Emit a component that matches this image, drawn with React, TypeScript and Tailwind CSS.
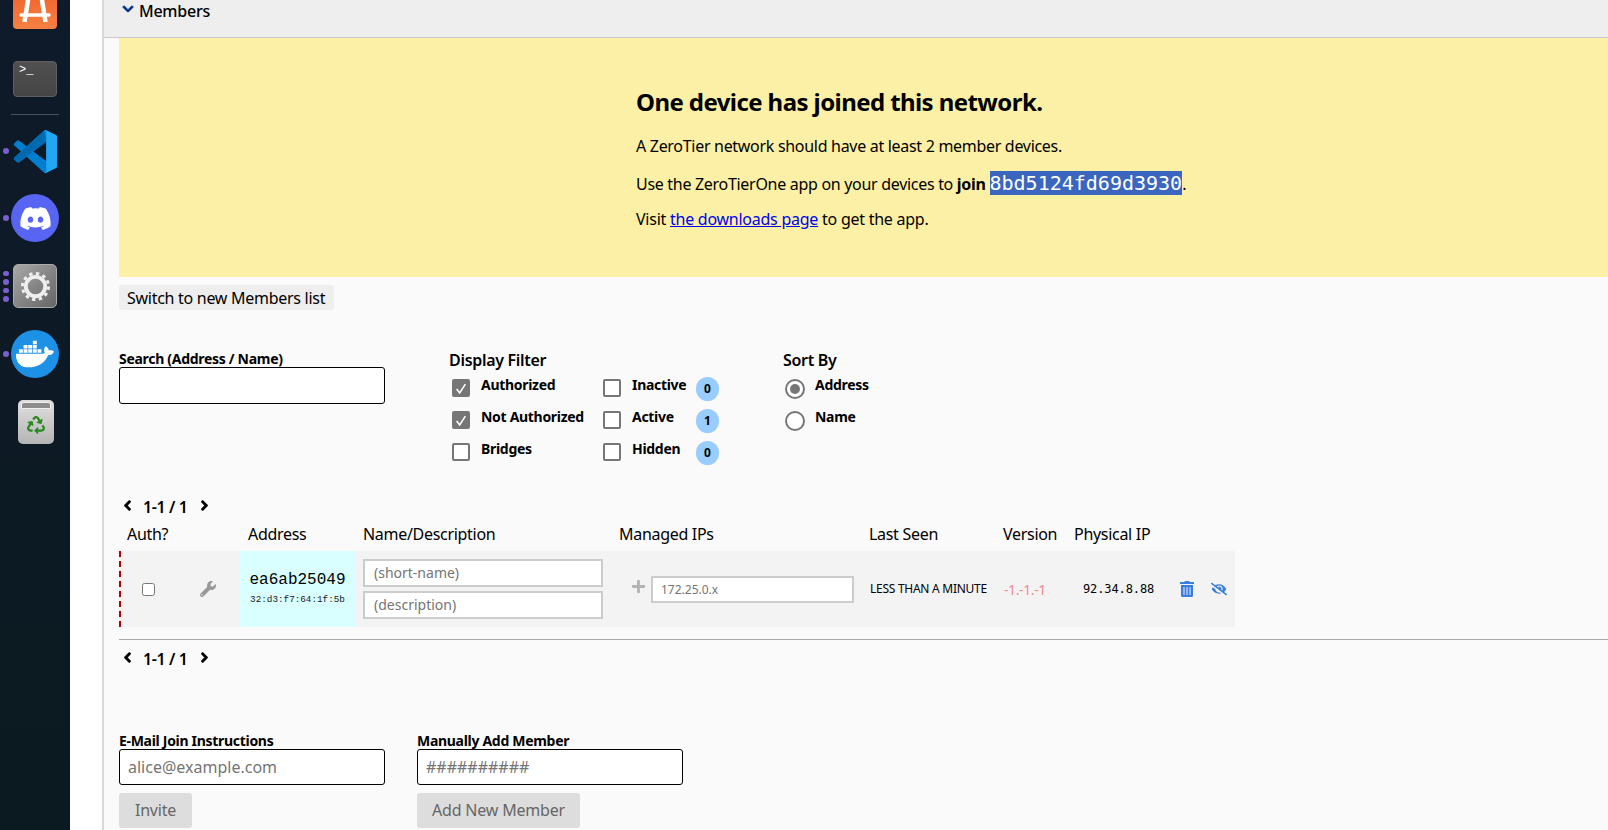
import React from "react";
import { FaChevronDown, FaChevronLeft, FaChevronRight, FaWrench, FaPlus, FaTrashAlt, FaEyeSlash, FaDiscord, FaDocker, FaRecycle } from "react-icons/fa";

const ff = "[font-family:'Noto_Sans','Open_Sans',sans-serif]";

function Dot({ n = 1 }: { n?: number }) {
  return (
    <div className="flex w-[11px] shrink-0 flex-col items-center justify-center gap-[3px] pl-[1px]">
      {Array.from({ length: n }).map((_, i) => (
        <span key={i} className="h-[5.5px] w-[5.5px] rounded-full bg-[#7a5fd0]" />
      ))}
    </div>
  );
}

function VsCodeLogo() {
  return (
    <svg viewBox="0 0 100 100" className="h-[43px] w-[43px]">
      <path d="M70.9 99.3a6.2 6.2 0 0 0 5-.2l20.6-9.9a6.2 6.2 0 0 0 3.5-5.6V16.4a6.2 6.2 0 0 0-3.5-5.6L75.9.9a6.2 6.2 0 0 0-7.1 1.2L29.4 38 12.2 25a4.2 4.2 0 0 0-5.3.2L1.4 30.3a4.2 4.2 0 0 0 0 6.2L16.3 50 1.4 63.5a4.2 4.2 0 0 0 0 6.2l5.5 5a4.2 4.2 0 0 0 5.3.3l17.2-13 39.4 36a6.2 6.2 0 0 0 2.1 1.3zM75 27.3 45.1 50 75 72.7V27.3z" fill="#007fd0" fillRule="evenodd" />
      <path d="M12.2 75 6.9 74.7 1.4 69.7a4.2 4.2 0 0 1 0-6.2L68.8 2.1 75 27.3 12.2 75z" fill="#0069b0" />
      <path d="M70.9 99.3a6.2 6.2 0 0 0 5-.2l20.6-9.9a6.2 6.2 0 0 0 3.5-5.6V16.4a6.2 6.2 0 0 0-3.5-5.6L75.9.9a6.2 6.2 0 0 0-5-.2c1.9.8 4.1 2.4 4.1 5.3v88c0 2.9-2.2 4.5-4.1 5.3z" fill="#22a7f2" />
    </svg>
  );
}

function Dock() {
  return (
    <aside className="flex h-full w-[70px] shrink-0 flex-col overflow-hidden bg-gradient-to-b from-[#0f1a2a] to-[#0b1a20]">
      <div className="-mt-[8px] flex h-[37px] pl-[13px]">
        <div className="flex h-[37px] w-[44px] items-center justify-center rounded-[4px] bg-gradient-to-b from-[#f0622a] to-[#f68144]">
          <svg viewBox="0 0 44 37" className="h-[37px] w-[44px]">
            <path d="M16 2 L11.500 30 M28 2 L32.500 30 M16 2 H28" stroke="#fff" strokeWidth="4.500" fill="none" />
            <path d="M8 23 H36" stroke="#fff" strokeWidth="3.500" strokeLinecap="round" />
          </svg>
        </div>
      </div>
      <div className="mt-[32px] flex pl-[13px]">
        <div className="h-[36px] w-[44px] rounded-[4px] border border-[#5f5f5f] bg-gradient-to-b from-[#505050] to-[#454545] pl-[5px] font-['Liberation_Mono',monospace] text-[12px] leading-[17px] text-white">
          &gt;_
        </div>
      </div>
      <div className="mx-[11px] mt-[17px] h-px w-[48px] bg-[#4a5058]" />
      <div className="mt-[14px] flex h-[44px] items-center">
        <Dot />
        <span className="ml-[2px] flex h-[44px] w-[44px] items-center justify-center">
          <VsCodeLogo />
        </span>
      </div>
      <div className="mt-[21px] flex h-[48px] items-center">
        <Dot />
        <span className="flex h-[48px] w-[48px] items-center justify-center rounded-full bg-[#5865f2] text-white">
          <FaDiscord size={33} />
        </span>
      </div>
      <div className="mt-[22px] flex h-[44px] items-center">
        <Dot n={4} />
        <span className="ml-[2px] flex h-[44px] w-[44px] items-center justify-center rounded-[5px] border border-[#aaa] bg-gradient-to-br from-[#a8a8a8] to-[#666]">
          <svg viewBox="0 0 32 32" className="h-[31px] w-[31px]">
            <circle cx="16" cy="16" r="10" fill="none" stroke="#eee" strokeWidth="4" />
            <circle cx="16" cy="16" r="13.500" fill="none" stroke="#eee" strokeWidth="3" strokeDasharray="3.500 3.570" />
          </svg>
        </span>
      </div>
      <div className="mt-[22px] flex h-[48px] items-center">
        <Dot />
        <span className="flex h-[48px] w-[48px] items-center justify-center rounded-full bg-[#1d91e6] text-white">
          <FaDocker size={38} />
        </span>
      </div>
      <div className="mt-[22px] flex justify-center pl-[1px]">
        <div className="flex h-[44px] w-[36px] flex-col items-center rounded-[5px] bg-gradient-to-b from-[#e0e0e0] to-[#b5b5b5]">
          <div className="mt-[2px] h-[7px] w-[30px] rounded-t-[3px] border border-[#eee] bg-[#8e8e8e]" />
          <span className="mt-[7px] text-[#2a8a1d]"><FaRecycle size={18} /></span>
        </div>
      </div>
    </aside>
  );
}

function Check({ checked, label, badge }: { checked?: boolean; label: string; badge?: string }) {
  return (
    <div className="flex h-[32px] items-start">
      <span className={`mt-[4px] flex h-[18px] w-[18px] shrink-0 items-center justify-center rounded-[2px] border-2 border-[#767676] ${checked ? "bg-[#767676]" : "bg-white"}`}>
        {checked && (
          <svg viewBox="0 0 16 16" className="h-[15px] w-[15px]"><path d="M3 8.500 L6.500 13 L13 3" stroke="#fff" strokeWidth="1.800" fill="none" /></svg>
        )}
      </span>
      <span className="ml-[11px] text-[14px] leading-[20px] font-bold tracking-[-0.3px]">{label}</span>
      {badge && (
        <span className="ml-auto mt-[2px] flex h-[24px] w-[23px] items-center justify-center rounded-full bg-[#99ccff] text-[12px] font-bold">{badge}</span>
      )}
    </div>
  );
}

function Radio({ checked, label }: { checked?: boolean; label: string }) {
  return (
    <div className="flex h-[32px] items-start">
      <span className="mt-[4px] flex h-[20px] w-[20px] items-center justify-center rounded-full border-2 border-[#767676] bg-white">
        {checked && <span className="h-[10px] w-[10px] rounded-full bg-[#767676]" />}
      </span>
      <span className="ml-[10px] text-[14px] leading-[20px] font-bold tracking-[-0.3px]">{label}</span>
    </div>
  );
}

function Pager({ className }: { className: string }) {
  return (
    <div className={`flex h-[20px] items-center text-[#000] ${className}`}>
      <FaChevronLeft size={11} stroke="currentColor" strokeWidth={50} className="ml-[3px] mb-[4px]" />
      <span className="ml-[10px] w-[56px] text-[16px] font-semibold tracking-[-0.4px]">1-1 / 1</span>
      <FaChevronRight size={11} stroke="currentColor" strokeWidth={50} className="mb-[4px]" />
    </div>
  );
}

function Field({ label, placeholder, button, w }: { label: string; placeholder: string; button: string; w: string }) {
  return (
    <div className="w-[266px]">
      <div className="h-[17px] text-[14px] leading-[18px] font-bold tracking-[-0.3px]">{label}</div>
      <input readOnly placeholder={placeholder} className="block h-[36px] w-[266px] rounded-[3px] border border-black bg-white px-[8px] text-[16px] outline-none placeholder:text-[#757575]" />
      <button className={`mt-[8px] block h-[35px] rounded-[3px] bg-[#dddddd] pb-[1px] text-[16px] tracking-[-0.2px] text-[#666] ${w}`}>{button}</button>
    </div>
  );
}

export default function App() {
  return (
    <div className={`flex h-[830px] w-[1608px] overflow-hidden bg-white text-black ${ff}`}>
      <Dock />
      <div className="w-[32px] shrink-0 bg-white" />
      <main className="flex h-full min-w-0 flex-1 flex-col border-l-2 border-[#d8d8d8] bg-[#fafafa]">
        <header className="flex h-[38px] shrink-0 items-start border-b border-[#c8c8c8] bg-[#eeeeee]">
          <FaChevronDown size={12} stroke="currentColor" strokeWidth={40} className="ml-[18px] mt-[3px] text-[#00338a]" />
          <span className="ml-[5px] text-[16px] leading-[22px] font-medium tracking-[-0.25px]">Members</span>
        </header>
        <div className="ml-[15px] flex flex-col">
          <section className="h-[239px] bg-[#fbf0a5] pl-[517px] pt-[47px] text-[16px] tracking-[-0.3px]">
            <h2 className="h-[34px] text-[24px] leading-[34px] font-bold tracking-[-0.58px]">One device has joined this network.</h2>
            <p className="mt-[14px] h-[26px] leading-[26px]">A ZeroTier network should have at least 2 member devices.</p>
            <p className="mt-[11px] h-[26px] leading-[26px]">
              Use the ZeroTierOne app on your devices to <b>join</b>{" "}
              <span className="bg-[#3a66c0] font-['DejaVu_Sans_Mono',monospace] text-[20px] tracking-normal text-[#fff]">8bd5124fd69d3930</span>.
            </p>
            <p className="mt-[10px] h-[26px] leading-[26px] tracking-[-0.25px]">
              Visit <a href="#" className="text-[#0000ee] underline">the downloads page</a> to get the app.
            </p>
          </section>

          <button className="mt-[8px] h-[25px] w-[215px] rounded-[3px] bg-[#eeeeee] pl-[8px] pt-[1px] text-left text-[16px] leading-[25px] tracking-[-0.28px]">Switch to new Members list</button>

          <div className="mt-[40px] flex h-[147px] items-start">
            <div className="w-[330px]">
              <div className="h-[17px] text-[14px] leading-[18px] font-bold tracking-[-0.3px]">Search (Address / Name)</div>
              <input readOnly className="block h-[37px] w-[266px] rounded-[3px] border border-black bg-white" />
            </div>
            <div className="w-[334px]">
              <div className="h-[20px] text-[16px] leading-[20px] font-semibold tracking-[-0.3px]">Display Filter</div>
              <div className="ml-[3px] mt-[5px] grid grid-cols-[151px_116px]">
                <Check checked label="Authorized" />
                <Check label="Inactive" badge="0" />
                <Check checked label="Not Authorized" />
                <Check label="Active" badge="1" />
                <Check label="Bridges" />
                <Check label="Hidden" badge="0" />
              </div>
            </div>
            <div>
              <div className="h-[20px] text-[16px] leading-[20px] font-semibold tracking-[-0.3px]">Sort By</div>
              <div className="ml-[2px] mt-[5px]">
                <Radio checked label="Address" />
                <Radio label="Name" />
              </div>
            </div>
          </div>

          <Pager className="" />

          <div className="mt-[6px] flex h-[22px] items-center text-[16px] tracking-[-0.3px]">
            <span className="ml-[8px] w-[121px]">Auth?</span>
            <span className="w-[115px]">Address</span>
            <span className="w-[256px]">Name/Description</span>
            <span className="w-[250px]">Managed IPs</span>
            <span className="w-[134px]">Last Seen</span>
            <span className="w-[71px]">Version</span>
            <span>Physical IP</span>
          </div>

          <div className="mt-[6px] flex h-[76px] w-[1116px] items-center border-l-2 border-dashed border-[#b50000] bg-[#f3f3f3]">
            <div className="flex w-[34px] justify-end">
              <input type="checkbox" readOnly className="h-[13px] w-[13px]" />
            </div>
            <div className="flex w-[85px] justify-center pl-[20px] text-[#999]"><FaWrench size={16} /></div>
            <div className="flex h-full w-[115px] flex-col items-center justify-center bg-[#d9ffff] pb-[3px]">
              <div className="font-['Liberation_Mono',monospace] text-[16px] leading-[20px]">ea6ab25049</div>
              <div className="mt-[4px] font-['Liberation_Mono',monospace] text-[9.3px] leading-[11px] text-[#222]">32:d3:f7:64:1f:5b</div>
            </div>
            <div className="ml-[8px] flex w-[240px] flex-col gap-[4px]">
              <input readOnly placeholder="(short-name)" className="block h-[28px] w-[240px] border-2 border-[#ccc] bg-white px-[9px] pb-[1px] text-[14px] placeholder:text-[#757575]" />
              <input readOnly placeholder="(description)" className="block h-[28px] w-[240px] border-2 border-[#ccc] bg-white px-[9px] pb-[1px] text-[14px] placeholder:text-[#757575]" />
            </div>
            <span className="ml-[28px] mb-[6px] text-[#b3b3b3]"><FaPlus size={15} /></span>
            <input readOnly placeholder="172.25.0.x" className="ml-[5px] block h-[27px] w-[203px] border-2 border-[#ccc] bg-white px-[8px] text-[12px] placeholder:text-[#757575]" />
            <span className="ml-[16px] w-[134px] text-[12px] tracking-[-0.27px] text-black">LESS THAN A MINUTE</span>
            <span className="w-[79px] text-[14px] tracking-[-0.4px] text-[#f58a8a]">-1.-1.-1</span>
            <span className="w-[96px] font-['DejaVu_Sans_Mono',monospace] text-[12px] tracking-[-0.1px]">92.34.8.88</span>
            <span className="text-[#3a7de0]"><FaTrashAlt size={16} /></span>
            <span className="ml-[16px] text-[#3a7de0]"><FaEyeSlash size={16} /></span>
          </div>

          <div className="mt-[12px] h-px bg-[#a8a8a8]" />
          <Pager className="mt-[9px]" />

          <div className="mt-[63px] flex items-start gap-[32px]">
            <Field label="E-Mail Join Instructions" placeholder="alice@example.com" button="Invite" w="w-[73px]" />
            <Field label="Manually Add Member" placeholder="##########" button="Add New Member" w="w-[163px]" />
          </div>
        </div>
      </main>
    </div>
  );
}
